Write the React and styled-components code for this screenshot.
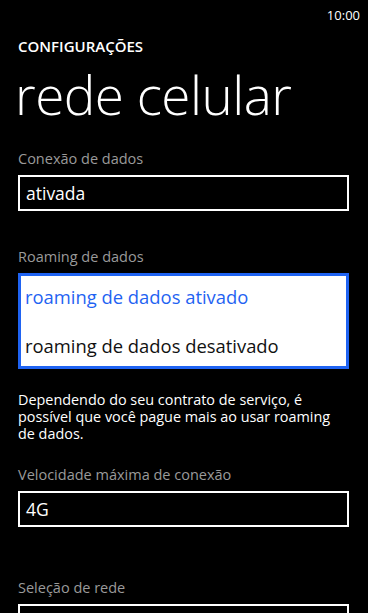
import React from "react";
import styled, { createGlobalStyle } from "styled-components";

const GlobalStyle = createGlobalStyle`
  html, body {
    margin: 0;
    padding: 0;
    background: #000;
  }
  body {
    font-family: "Open Sans", "Noto Sans", sans-serif;
    color: #fff;
  }
`;

const Screen = styled.div`
  width: 368px;
  height: 613px;
  overflow: hidden;
  background: #000;
`;

const StatusBar = styled.div`
  height: 30px;
  display: flex;
  align-items: center;
  justify-content: flex-end;
  padding-right: 8px;
  font-size: 13px;
`;

const Header = styled.header`
  padding: 6px 0 0 18px;
`;

const AppTitle = styled.div`
  font-size: 15px;
  font-weight: 600;
  line-height: 20px;
`;

const PageTitle = styled.h1`
  margin: 8px 0 0 -3px;
  font-size: 53px;
  font-weight: 300;
  line-height: 62px;
  letter-spacing: -0.5px;
`;

const Content = styled.div`
  padding: 0 19px 0 18px;
`;

const Section = styled.section`
  margin-top: ${(p) => p.$gap}px;
`;

const Label = styled.div`
  font-size: 14.5px;
  line-height: 20px;
  color: #9a9a9a;
  margin-bottom: 6px;
`;

const Box = styled.div`
  box-sizing: border-box;
  height: 36px;
  border: 2px solid #fff;
  padding: 0 6px;
  display: flex;
  align-items: center;
  font-size: 17.5px;
`;

const OpenList = styled.ul`
  box-sizing: border-box;
  height: 96px;
  margin: 0;
  padding: 9px 4px 0;
  list-style: none;
  background: #fff;
  border: 3px solid #1f63f2;
  display: flex;
  flex-direction: column;
  gap: 25px;
`;

const Option = styled.li`
  font-size: 18.4px;
  line-height: 24px;
  white-space: nowrap;
  color: ${(p) => (p.$selected ? "#1f63f2" : "#111")};
`;

const Note = styled.p`
  margin: 22px 0 0;
  font-size: 14.4px;
  line-height: 17px;
  color: #fff;
`;

export default function App() {
  return (
    <Screen>
      <GlobalStyle />
      <StatusBar>10:00</StatusBar>
      <Header>
        <AppTitle>CONFIGURAÇÕES</AppTitle>
        <PageTitle>rede celular</PageTitle>
      </Header>
      <Content>
        <Section $gap={23}>
          <Label>Conexão de dados</Label>
          <Box>ativada</Box>
        </Section>
        <Section $gap={36}>
          <Label>Roaming de dados</Label>
          <OpenList>
            <Option $selected>roaming de dados ativado</Option>
            <Option>roaming de dados desativado</Option>
          </OpenList>
        </Section>
        <Note>
          Dependendo do seu contrato de serviço, é possível que você pague
          mais ao usar roaming de dados.
        </Note>
        <Section $gap={23}>
          <Label>Velocidade máxima de conexão</Label>
          <Box>4G</Box>
        </Section>
        <Section $gap={51}>
          <Label>Seleção de rede</Label>
          <Box />
        </Section>
      </Content>
    </Screen>
  );
}
